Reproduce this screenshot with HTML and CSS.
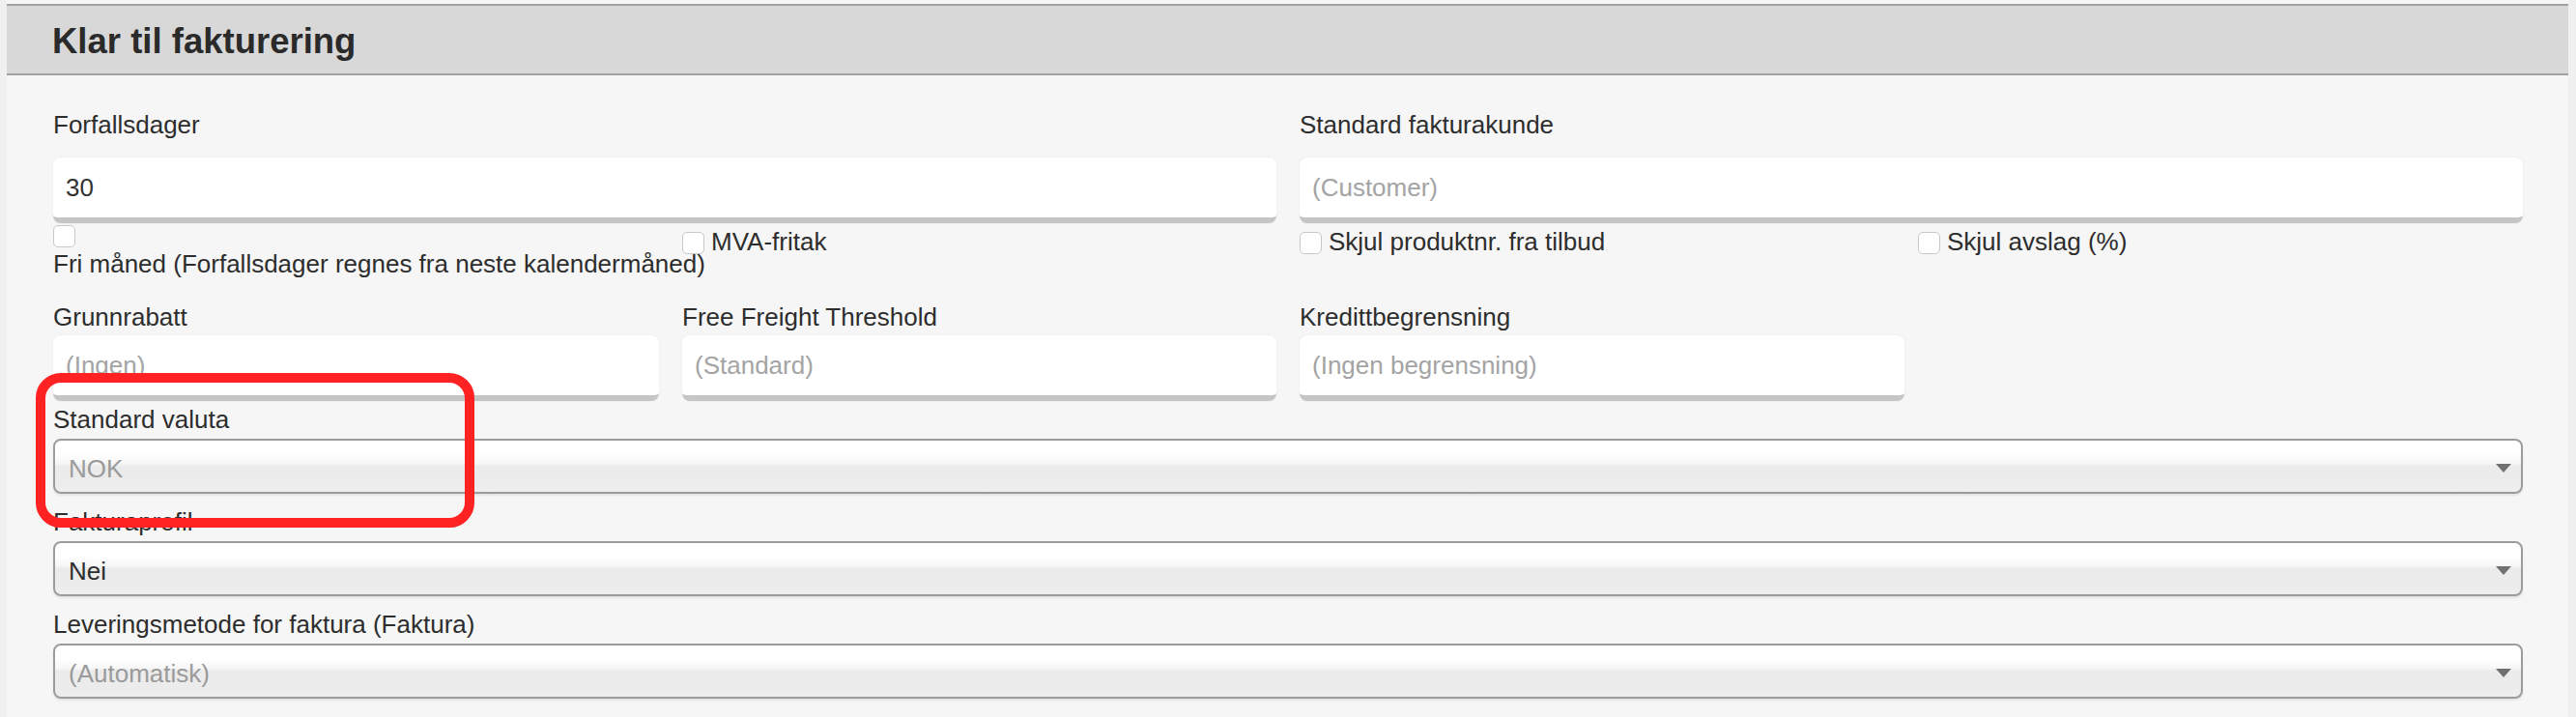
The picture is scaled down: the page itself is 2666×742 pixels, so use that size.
FILE: index.html
```html
<!DOCTYPE html>
<html lang="no">
<head>
    <meta charset="UTF-8">
    <meta name="viewport" content="width=device-width, initial-scale=1.0">
    <title>Klar til fakturering</title>
    <link rel="stylesheet" href="styles.css">
</head>
<body>
    <div class="panel">
        <h2 class="panel-title">Klar til fakturering</h2>

        <div class="panel-body">
            <div class="row row-two">
                <div class="field field-top">
                    <label>Forfallsdager</label>
                    <input type="text" value="30">
                </div>
                <div class="field field-top">
                    <label>Standard fakturakunde</label>
                    <input type="text" placeholder="(Customer)">
                </div>
            </div>

            <div class="row row-four row-checks">
                <label class="check check-wrap"><input type="checkbox"><span>Fri måned (Forfallsdager regnes fra neste kalendermåned)</span></label>
                <label class="check"><input type="checkbox"><span>MVA-fritak</span></label>
                <label class="check"><input type="checkbox"><span>Skjul produktnr. fra tilbud</span></label>
                <label class="check check-last"><input type="checkbox"><span>Skjul avslag (%)</span></label>
            </div>

            <div class="row row-four row-fields">
                <div class="field">
                    <label>Grunnrabatt</label>
                    <input type="text" placeholder="(Ingen)">
                </div>
                <div class="field">
                    <label>Free Freight Threshold</label>
                    <input type="text" placeholder="(Standard)">
                </div>
                <div class="field">
                    <label>Kredittbegrensning</label>
                    <input type="text" placeholder="(Ingen begrensning)">
                </div>
            </div>

            <div class="field select-field first">
                <label>Standard valuta</label>
                <div class="select-wrap">
                    <select class="muted"><option>NOK</option></select>
                </div>
                <div class="mark"></div>
            </div>

            <div class="field select-field">
                <label>Fakturaprofil</label>
                <div class="select-wrap">
                    <select><option>Nei</option></select>
                </div>
            </div>

            <div class="field select-field">
                <label>Leveringsmetode for faktura (Faktura)</label>
                <div class="select-wrap">
                    <select class="muted"><option>(Automatisk)</option></select>
                </div>
            </div>
        </div>
    </div>
</body>
</html>
```

FILE: styles.css
```css
body {
    margin: 0;
    background-color: #f0f0f0;
    font-family: "Liberation Sans", Arial, sans-serif;
    font-size: 26px;
    color: #2d2d2d;
}

.panel {
    margin: 0 8px 0 7px;
    padding-top: 4px;
    background-color: #f6f6f6;
}

.panel-title {
    margin: 0;
    height: 66px;
    padding: 4px 0 0 47px;
    line-height: 66px;
    font-size: 36.5px;
    font-weight: bold;
    color: #2a2a2a;
    background-color: #d8d8d8;
    border-top: 2px solid #a2a2a2;
    border-bottom: 2px solid #a2a2a2;
}

.panel-body {
    padding: 36px 47px 19px 48px;
}

.row {
    display: grid;
    column-gap: 24px;
}

.row-two {
    grid-template-columns: 1fr 1fr;
}

.row-four {
    grid-template-columns: 627px 615px 626px 1fr;
}

.row-checks {
    align-items: start;
}

.row-fields {
    margin-top: 25px;
}

.field label {
    display: block;
    line-height: 30px;
    margin-bottom: 4px;
}

.field-top label {
    margin-bottom: 19px;
}

input[type="text"] {
    display: block;
    width: 100%;
    height: 68px;
    box-sizing: border-box;
    margin: 0;
    padding: 0 13px;
    font-family: inherit;
    font-size: 26px;
    color: #333;
    background-color: #fff;
    border: none;
    border-bottom: 6px solid #c5c5c5;
    border-radius: 8px;
    box-shadow: 0 0 2px rgba(0, 0, 0, 0.08);
    outline: none;
}

input[type="text"]::placeholder {
    color: #a4a4a4;
}

/* avkrysningsbokser */
.check {
    display: flex;
    flex-wrap: wrap;
    align-items: center;
    align-content: flex-start;
    column-gap: 7px;
    row-gap: 2px;
    padding-top: 4px;
    line-height: 30px;
}

.check span {
    white-space: nowrap;
}

.check-wrap {
    padding-top: 0;
}

.check-last {
    margin-left: -10px;
}

input[type="checkbox"] {
    -webkit-appearance: none;
    appearance: none;
    flex-shrink: 0;
    width: 23px;
    height: 23px;
    margin: 2px 0 0 0;
    background-color: #fff;
    border: 1px solid #c8c8c8;
    border-radius: 5px;
}

.select-field {
    position: relative;
    margin-top: 14px;
}

.select-field.first {
    margin-top: 4px;
}

.select-field label {
    margin-bottom: 5px;
}

.select-wrap {
    position: relative;
}

.select-wrap::after {
    content: "";
    position: absolute;
    right: 12px;
    top: 50%;
    margin-top: -3px;
    border-left: 8px solid transparent;
    border-right: 8px solid transparent;
    border-top: 9px solid #707070;
    pointer-events: none;
}

select {
    -webkit-appearance: none;
    appearance: none;
    display: block;
    width: 100%;
    height: 57px;
    box-sizing: border-box;
    margin: 0;
    padding: 14px 40px 9px 14px;
    font-family: inherit;
    font-size: 26px;
    line-height: 30px;
    color: #2d2d2d;
    border: 2px solid #9c9c9c;
    border-radius: 8px;
    background: linear-gradient(to bottom, #fff 0%, #fff 25%, #f7f7f7 44%, #ebebeb 50%, #ececec 85%, #efefef 100%);
    box-shadow: 0 2px 2px rgba(0, 0, 0, 0.08);
    outline: none;
}

select.muted {
    color: #9a9a9a;
}

/* rød markering rundt valuta */
.mark {
    position: absolute;
    left: -18px;
    top: -33px;
    width: 454px;
    height: 160px;
    box-sizing: border-box;
    border: 10px solid #fe2222;
    border-radius: 26px;
    pointer-events: none;
    z-index: 2;
}
```
